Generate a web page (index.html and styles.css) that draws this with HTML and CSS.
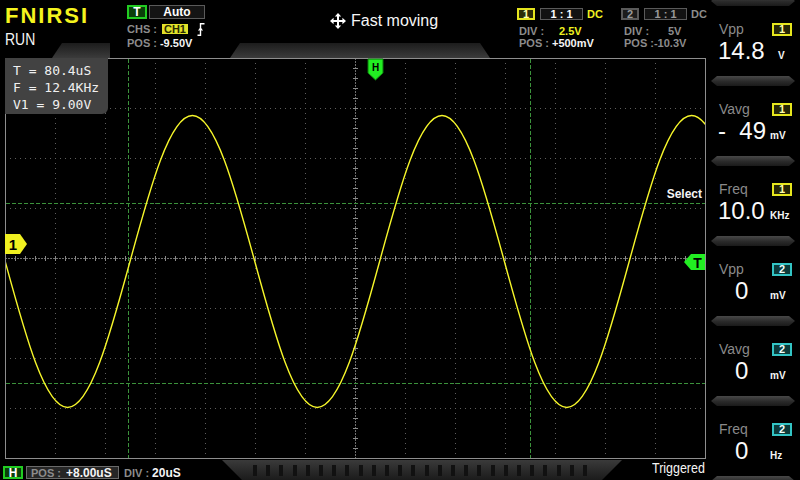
FILE: index.html
```html
<!DOCTYPE html>
<html>
<head>
<meta charset="utf-8">
<title>Scope</title>
<link rel="stylesheet" href="styles.css">
</head>
<body>
<div class="screen">
  <div class="main">
    <header class="hdr">
      <div class="hdr-layer hdr-bands">
        <div class="band band-a"></div>
        <div class="band band-b"></div>
      </div>
      <div class="hdr-layer hdr-content">
        <div class="logo-block">
          <div class="logo">FNIRSI</div>
          <div class="run">RUN</div>
        </div>
        <div class="trig-block">
          <div class="t-row1">
            <span class="tag tag-g">T</span>
            <span class="tag box-auto">Auto</span>
          </div>
          <div class="info-row t-row2"><span class="lbl">CHS :</span><span class="chs-badge">CH1</span><svg class="edge-ico" width="8" height="13" viewBox="0 0 8 13"><path d="M0.5 12.3H3.5V0.7H7.5" stroke="#fff" stroke-width="1.4" fill="none"/><path d="M1.6 7.6L3.5 5.2L5.4 7.6" stroke="#fff" stroke-width="1.2" fill="none"/></svg></div>
          <div class="info-row t-row3"><span class="lbl">POS :</span><span class="wht gap3">-9.50V</span></div>
        </div>
        <div class="center-block">
          <svg class="move-ico" width="16" height="16" viewBox="0 0 16 16"><path d="M8 3V13M3 8H13" stroke="#fff" stroke-width="2"/><path d="M8 0L11.2 3.6H4.8Z M8 16L4.8 12.4H11.2Z M0 8L3.6 4.8V11.2Z M16 8L12.4 11.2V4.8Z" fill="#fff"/></svg>
          <span class="fast">Fast moving</span>
        </div>
        <div class="ch-block ch1">
          <div class="ch-row1">
            <span class="tag ch-num">1</span>
            <span class="tag ratio">1 : 1</span>
            <span class="cpl">DC</span>
          </div>
          <div class="info-row ch-row2"><span class="lbl div-lbl">DIV :</span><span class="yel">2.5V</span></div>
          <div class="info-row ch-row3"><span class="lbl">POS :</span><span class="wht gap3">+500mV</span></div>
        </div>
        <div class="ch-block ch2">
          <div class="ch-row1">
            <span class="tag ch-num">2</span>
            <span class="tag ratio">1 : 1</span>
            <span class="cpl">DC</span>
          </div>
          <div class="info-row ch-row2"><span class="lbl div-lbl">DIV :</span><span class="lbl val5">5V</span></div>
          <div class="info-row ch-row3"><span class="lbl">POS :</span><span class="lbl">-10.3V</span></div>
        </div>
      </div>
    </header>

    <div class="plot">
      <svg class="plot-svg" width="701" height="401" viewBox="5 58 701 401">
        <defs>
          <clipPath id="inner"><rect x="6" y="59" width="699" height="399"/></clipPath>
        </defs>
        <rect x="5" y="58" width="701" height="401" fill="#000"/>
        <g class="grid-dots">
          <path d="M55.5 58V458M105.5 58V458M155.5 58V458M205.5 58V458M255.5 58V458M305.5 58V458M405.5 58V458M455.5 58V458M505.5 58V458M555.5 58V458M605.5 58V458M655.5 58V458"/>
          <path d="M5 108.5H705M5 158.5H705M5 208.5H705M5 308.5H705M5 358.5H705M5 408.5H705"/>
        </g>
        <g class="grid-center">
          <path d="M355.5 58V458M5 258.5H705"/>
        </g>
        <g class="grid-ticks">
          <path d="M5 258.5H706"/>
          <path d="M355.5 58V459"/>
        </g>
        <g class="cursors">
          <path d="M128.5 59V458M530.5 59V458"/>
          <path d="M6 203.5H705M6 383.5H705"/>
        </g>
        <path class="wave" clip-path="url(#inner)" d="M-57.2 115.5 C-34.62 115.5 -15.15 186.7 5.2 261.5 C25.55 336.3 45.02 407.5 67.6 407.5 C90.18 407.5 109.65 336.3 130 261.5 C150.35 186.7 169.82 115.5 192.4 115.5 C214.98 115.5 234.45 186.7 254.8 261.5 C275.15 336.3 294.62 407.5 317.2 407.5 C339.78 407.5 359.25 336.3 379.6 261.5 C399.95 186.7 419.42 115.5 442 115.5 C464.58 115.5 484.05 186.7 504.4 261.5 C524.75 336.3 544.22 407.5 566.8 407.5 C589.38 407.5 608.85 336.3 629.2 261.5 C649.55 186.7 669.02 115.5 691.6 115.5 C714.18 115.5 733.65 186.7 754 261.5"/>
        <rect class="frame" x="5.5" y="58.5" width="700" height="400"/>
        <polygon class="mk-yel" points="5,234 20,234 27,244 20,254 5,254"/>
        <text class="mk-text mk-1" x="13" y="250">1</text>
        <polygon class="mk-grn" points="684,262 691,254 705,254 705,270 691,270"/>
        <text class="mk-text mk-t" x="697.5" y="267.5">T</text>
        <polygon class="mk-grn mk-h-shape" points="368,59 383,59 383,73 375.5,80 368,73"/>
        <text class="mk-text mk-h" x="375.5" y="71">H</text>
      </svg>
      <div class="meas">
        <div class="meas-line">T = 80.4uS</div>
        <div class="meas-line">F = 12.4KHz</div>
        <div class="meas-line">V1 = 9.00V</div>
      </div>
      <div class="select">Select</div>
    </div>

    <footer class="ftr">
      <span class="tag tag-g tag-h">H</span>
      <div class="pos-box"><span class="lbl">POS :</span><span class="wht fval">+8.00uS</span></div>
      <div class="div-f"><span class="lbl">DIV :</span><span class="wht fval">20uS</span></div>
      <div class="ruler"></div>
      <div class="trig-text">Triggered</div>
    </footer>
  </div>

  <aside class="side">
    <div class="pill pill-first"></div>
    <section class="m">
      <div class="m-head"><span class="m-name">Vpp</span><span class="badge badge-1">1</span></div>
      <div class="m-val"><span class="val">14.8</span><span class="unit unit-v">V</span></div>
    </section>
    <div class="pill"></div>
    <section class="m">
      <div class="m-head"><span class="m-name">Vavg</span><span class="badge badge-1">1</span></div>
      <div class="m-val"><span class="val"><span>-</span><span>49</span></span><span class="unit">mV</span></div>
    </section>
    <div class="pill"></div>
    <section class="m">
      <div class="m-head"><span class="m-name">Freq</span><span class="badge badge-1">1</span></div>
      <div class="m-val"><span class="val">10.0</span><span class="unit">KHz</span></div>
    </section>
    <div class="pill"></div>
    <section class="m">
      <div class="m-head"><span class="m-name">Vpp</span><span class="badge badge-2">2</span></div>
      <div class="m-val"><span class="val val-zero">0</span><span class="unit">mV</span></div>
    </section>
    <div class="pill"></div>
    <section class="m">
      <div class="m-head"><span class="m-name">Vavg</span><span class="badge badge-2">2</span></div>
      <div class="m-val"><span class="val val-zero">0</span><span class="unit">mV</span></div>
    </section>
    <div class="pill"></div>
    <section class="m">
      <div class="m-head"><span class="m-name">Freq</span><span class="badge badge-2">2</span></div>
      <div class="m-val"><span class="val val-zero">0</span><span class="unit">Hz</span></div>
    </section>
    <div class="pill"></div>
  </aside>
</div>
</body>
</html>
```

FILE: styles.css
```css
* { box-sizing: border-box; }
html, body { margin: 0; padding: 0; background: #000; }
body {
  width: 800px; height: 480px; overflow: hidden;
  font-family: "Liberation Sans", Arial, sans-serif;
  color: #f2f2f2;
}
.screen {
  display: grid;
  grid-template-columns: 710px 90px;
  width: 800px; height: 480px; overflow: hidden;
}
.main { display: flex; flex-direction: column; min-width: 0; }

/* ---------- header ---------- */
.hdr { height: 58px; display: grid; flex: none; }
.hdr-layer { grid-area: 1 / 1; }
.hdr-bands { display: flex; align-items: flex-end; padding-left: 52px; }
.band { height: 15px; background: linear-gradient(#1c1c1c, #3b3b3b); flex: none; }
.band-a { width: 58px; clip-path: polygon(10px 0, 100% 0, 100% 100%, 0 100%); }
.band-b { width: 260px; margin-left: 120px; clip-path: polygon(10px 0, calc(100% - 10px) 0, 100% 100%, 0 100%); }

.hdr-content { display: flex; align-items: flex-start; padding-left: 5px; }
.hdr-content > * { flex: none; }
.logo-block { width: 122px; padding-top: 5px; }
.logo {
  font-size: 22px; line-height: 22px; font-weight: bold;
  color: #f4f41e; letter-spacing: 2px;
}
.run {
  margin-top: 4px; font-size: 17px; line-height: 17px; color: #f4f4f4;
  transform: scaleX(0.82); transform-origin: left center;
}

.tag {
  display: flex; align-items: center; justify-content: center;
  font-weight: bold; font-size: 12px; line-height: 1; flex: none;
}
.tag-g { width: 20px; height: 14px; border: 2px solid #22cc22; background: #0a3f0a; color: #fff; }
.box-auto { width: 56px; height: 14px; margin-left: 2px; border: 1px solid #5a5a5a; background: #141414; color: #fff; }

.trig-block { width: 203px; padding-top: 5px; }
.t-row1 { display: flex; height: 14px; }
.info-row {
  display: flex; align-items: center; height: 12px;
  font-size: 11px; line-height: 12px; font-weight: bold; white-space: pre;
}
.t-row2 { margin-top: 4px; }
.t-row3 { margin-top: 2px; }
.lbl { color: #8c8c8c; }
.wht { color: #f4f4f4; }
.yel { color: #f0f020; }
.gap3 { margin-left: 3px; }
.chs-badge {
  margin-left: 5px; height: 10px; padding: 0 2px; line-height: 10px;
  background: #e2e22a; color: #2a2a00;
}
.edge-ico { margin-left: 9px; display: block; }

.center-block { width: 187px; margin-top: 11px; height: 20px; display: flex; align-items: center; }
.move-ico { display: block; flex: none; }
.fast { margin-left: 5px; font-size: 16px; line-height: 20px; color: #f6f6f6; }

.ch-block { width: 104px; padding-top: 8px; }
.ch-row1 { display: flex; align-items: center; height: 12px; }
.ch-num { width: 18px; height: 12px; border: 2px solid #5a5a5a; font-size: 11px; }
.ch1 .ch-num { border-color: #e4e41e; background: #2b2b08; color: #ffffb0; }
.ch2 .ch-num { border-color: #5a5a5a; background: #1c1c1c; color: #9a9a9a; }
.ratio { width: 43px; height: 12px; margin-left: 5px; border: 1px solid #5a5a5a; background: #121212; font-size: 11px; white-space: pre; }
.ch1 .ratio { color: #fff; }
.ch2 .ratio { color: #9a9a9a; }
.cpl { margin-left: 4px; font-size: 11px; font-weight: bold; }
.ch1 .cpl { color: #f0f020; }
.ch2 .cpl { color: #8c8c8c; }
.ch-row2, .ch-row3 { padding-left: 2px; }
.ch2 .ch-row2, .ch2 .ch-row3 { padding-left: 3px; }
.ch-row2 { margin-top: 5px; }
.div-lbl { width: 40px; }
.val5 { margin-left: 4px; }

/* ---------- plot ---------- */
.plot { position: relative; width: 701px; height: 401px; margin-left: 5px; flex: none; }
.plot-svg { display: block; }
.grid-dots path { stroke: #5e5e5e; stroke-width: 1; stroke-dasharray: 1 4; fill: none; }
.grid-center path { stroke: #6e6e6e; stroke-width: 1; stroke-dasharray: 2 1; fill: none; }
.grid-ticks path { stroke: #8a8a8a; stroke-width: 5; stroke-dasharray: 1 9; fill: none; }
.cursors path { stroke: #3b923b; stroke-width: 1; stroke-dasharray: 4 2; fill: none; }
.wave { fill: none; stroke: #f6f62a; stroke-width: 1.4; }
.frame { fill: none; stroke: #8e8e8e; stroke-width: 1; }
.mk-yel { fill: #f0f020; }
.mk-grn { fill: #22ee22; }
.mk-h-shape { stroke: #0b7a0b; stroke-width: 1; }
.mk-text { font-family: "Liberation Sans", Arial, sans-serif; font-weight: bold; fill: #000; text-anchor: middle; }
.mk-1 { font-size: 15px; }
.mk-t { font-size: 14px; }
.mk-h { font-size: 10px; }

.meas {
  position: absolute; left: 0; top: 0; width: 103px; height: 56px;
  background: #424242; border-bottom-right-radius: 6px;
  padding: 4px 0 0 8px;
  font-family: "DejaVu Sans Mono", "Liberation Mono", monospace;
  font-size: 13px; line-height: 17px; color: #f0f0f0;
}
.meas-line { white-space: pre; height: 17px; }
.select {
  position: absolute; right: 4px; top: 130px;
  font-size: 12px; line-height: 12px; font-weight: bold; color: #f4f4f4;
}

/* ---------- footer ---------- */
.ftr { height: 21px; display: flex; align-items: flex-start; padding-left: 3px; flex: none; }
.ftr > * { flex: none; }
.tag-h { margin-top: 7px; height: 13px; }
.pos-box {
  margin-top: 7px; margin-left: 3px; width: 93px; height: 13px;
  border: 1px solid #6a6a6a; background: #262626;
  display: flex; align-items: center; padding-left: 4px;
  white-space: pre; font-weight: bold; line-height: 12px;
}
.pos-box .lbl, .div-f .lbl { font-size: 11px; }
.fval { font-size: 12px; margin-left: 5px; }
.div-f {
  margin-top: 7px; margin-left: 5px; width: 98px; height: 13px;
  display: flex; align-items: center; white-space: pre; font-weight: bold; line-height: 12px;
}
.div-f .fval { margin-left: 3px; }
.ruler {
  margin-top: 1px; width: 400px; height: 20px;
  clip-path: polygon(0 0, 100% 0, calc(100% - 20px) 100%, 20px 100%);
  background:
    repeating-linear-gradient(90deg, #111 0 4px, transparent 4px 13.2px) 31px 5px / 342px 11px no-repeat,
    linear-gradient(#3a3a3a, #1b1b1b);
}
.trig-text {
  margin-left: 30px; font-size: 15px; line-height: 18px; color: #f4f4f4;
  transform: scaleX(0.83); transform-origin: left center;
}

/* ---------- right panel ---------- */
.side { display: flex; flex-direction: column; }
.pill {
  flex: none; height: 10px; width: 84px; margin-left: 1px;
  background: linear-gradient(#484848, #2a2a2a 55%, #1a1a1a);
  clip-path: polygon(6px 0, calc(100% - 6px) 0, 100% 50%, calc(100% - 6px) 100%, 6px 100%, 0 50%);
}
.pill-first { margin-top: -4px; }
.m { flex: none; height: 70px; padding-top: 16px; }
.m-head {
  display: flex; justify-content: space-between; align-items: center;
  height: 14px; padding: 0 8px 0 9px;
}
.m-name { font-size: 14px; line-height: 14px; color: #8a8a8a; }
.badge {
  width: 20px; height: 13px; border: 2px solid;
  display: flex; align-items: center; justify-content: center;
  font-size: 11px; font-weight: bold; line-height: 1;
}
.badge-1 { border-color: #e6e61e; background: #262606; color: #ffffa8; }
.badge-2 { border-color: #33c4c4; background: #0b3a3a; color: #f0ffff; }
.m-val { display: flex; align-items: baseline; margin-top: 3px; height: 24px; padding-left: 8px; }
.val {
  width: 48px; display: flex; justify-content: space-between;
  font-size: 24px; line-height: 24px; color: #fafafa;
}
.val-zero { padding-left: 17px; }
.unit { margin-left: 4px; font-size: 10px; font-weight: bold; color: #f4f4f4; }
.unit-v { margin-left: 12px; }
```
